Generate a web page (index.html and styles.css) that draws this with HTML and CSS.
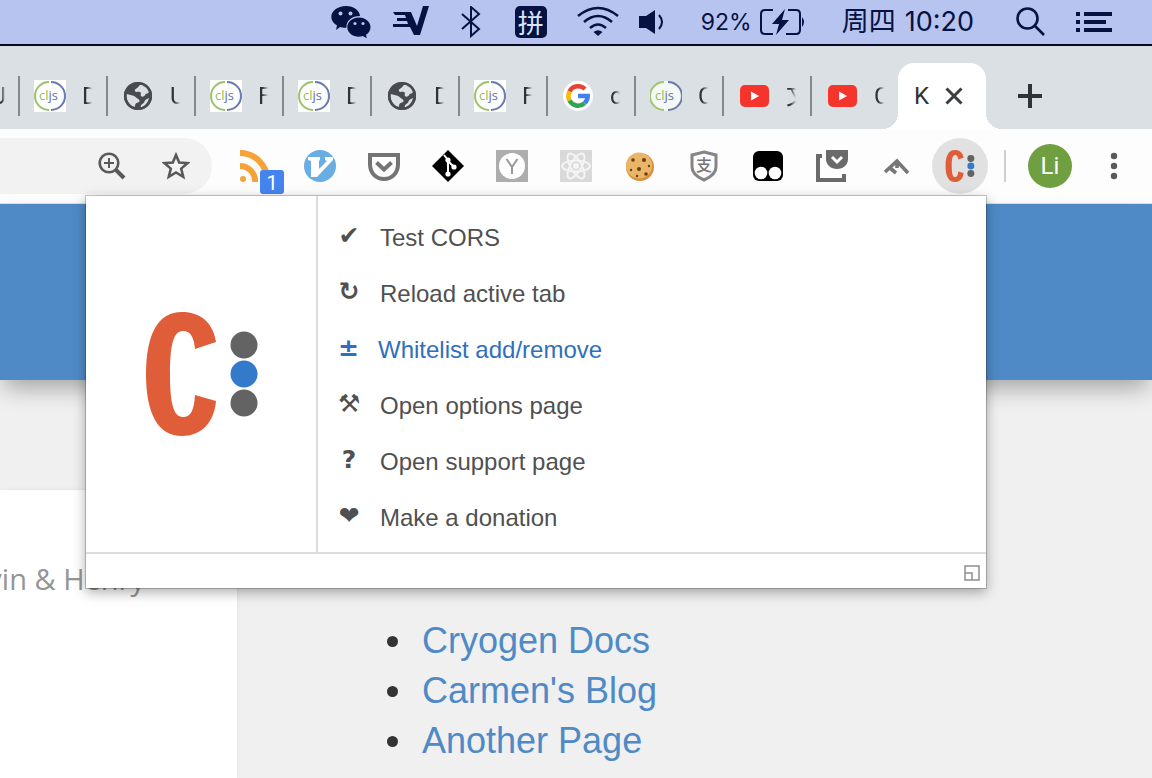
FILE: index.html
```html
<!DOCTYPE html>
<html lang="en">
<head>
<meta charset="utf-8">
<title>Kevin &amp; Henry</title>
<link rel="stylesheet" href="styles.css">
</head>
<body>
<svg class="defs" aria-hidden="true">
  <symbol id="logo" viewBox="0 0 112 124">
    <path fill="#df5e39" d="M70 30C67 10 54 0 36 0 12 0 0 22 0 62s12 62 36 62c18 0 32-12 34-35l-21-6c-1 15-4 22-12 22-10 0-13-15-13-43s3-43 13-43c8 0 11 7 12 18z"/>
    <circle cx="98" cy="33" r="13.5" fill="#636363"/>
    <circle cx="98" cy="62" r="13.5" fill="#347acb"/>
    <circle cx="98" cy="91" r="13.5" fill="#636363"/>
  </symbol>
  <symbol id="cljs" viewBox="0 0 32 32">
    <rect width="32" height="32" fill="#fdfefe"/>
    <path d="M15 2a14 14 0 0 0 0 28" fill="none" stroke="#9fc16b" stroke-width="2"/>
    <path d="M17 2a14 14 0 0 1 0 28" fill="none" stroke="#6b79ab" stroke-width="2"/>
    <text x="5" y="20" font-family="Open Sans" font-size="13" fill="#96bd5b">cl<tspan fill="#5f6fa8">js</tspan></text>
  </symbol>
  <symbol id="globe" viewBox="0 0 32 32">
    <circle cx="16" cy="16" r="14" fill="#484c50"/>
    <path fill="#dbe0e4" d="M19 4c4 1 7 4 8 8-1 2-3 1-4 3s-3 2-4 1 1-3-1-4-4 1-5-1 2-2 3-4zM4.500 14c3 1 7 1 9 3s4 2 4 4-3 1-4 3 0 2-1 3C7 25.500 4 20 4.500 14zM27 18c-1 5-4 8-8 9.500-1-1 0-3 2-4s1-3 3-4z"/>
    <circle cx="16" cy="16" r="12.800" fill="none" stroke="#484c50" stroke-width="2.600"/>
  </symbol>
  <symbol id="youtube" viewBox="0 0 32 32">
    <rect x="2" y="5" width="29" height="22" rx="5" fill="#f5342c"/>
    <path d="M13 11.500v9l8-4.500z" fill="#fff"/>
  </symbol>
</svg>

<header class="menubar">
  <span class="mb-icon mb-wide"><svg width="40" height="34" viewBox="0 0 40 34"><path fill="#051242" d="M15 1c8 0 13.500 4.500 14 10-8 0-14 4.500-13.500 11.500-2 .4-4.500.2-6.500-.5L5 25l1-4.500C2.500 18.500.3 15.500.3 12 .3 6 6.500 1 15 1z"/><path fill="#051242" d="M28 12.500c6.500 0 11.500 4.500 11.500 9.700 0 3.300-2 6-4.500 7.600l.8 3.500-4-2.200c-1 .3-2.500.6-3.800.6-6.500 0-11.700-4.200-11.700-9.500s5.200-9.700 11.700-9.700z"/><g fill="#b7c4f0"><circle cx="9.500" cy="8.500" r="2"/><circle cx="19.500" cy="8.500" r="2"/><circle cx="24" cy="18.500" r="1.600"/><circle cx="32" cy="18.500" r="1.600"/></g></svg></span>
  <span class="mb-icon mb-wide"><svg width="36" height="34" viewBox="0 0 36 34"><path fill="#051242" d="M0 7h18l6 14 6-20h6L27 30h-6l-4-8H0v-3h15l-1-3H4v-3h9l-1-3H2z"/></svg></span>
  <span class="mb-icon mb-wide"><svg width="20" height="32" viewBox="0 0 20 32"><path fill="none" stroke="#051242" stroke-width="2" d="M1 8l17 15-8 7V1l8 7L1 23"/></svg></span>
  <span class="mb-icon mb-wide"><span class="ime">拼</span></span>
  <span class="mb-icon mb-wifi"><svg width="42" height="32" viewBox="0 0 42 32"><g fill="none" stroke="#051242" stroke-width="2.600"><path d="M1 10q20-16 40 0M7 16q14-12 28 0M13 22q8-7 16 0"/></g><path fill="#051242" d="M16.500 26q4.500-3.500 9 0L21 30z"/></svg></span>
  <span class="mb-icon mb-volume"><svg width="28" height="26" viewBox="0 0 28 26"><path fill="#051242" d="M1 7h7l9-6v24l-9-6H1z"/><path d="M21 6q6 7 0 14" fill="none" stroke="#051242" stroke-width="2"/></svg></span>
  <span class="battery">92%
    <svg width="46" height="26" viewBox="0 0 46 26"><path d="M13 1H5Q1 1 1 5v16q0 4 4 4h8M28 1h8q4 0 4 4v16q0 4-4 4H26" fill="none" stroke="#051242" stroke-width="2"/><path fill="#051242" d="M25 0L12 15h7l-3 11 13-15h-7zM42 8q4 5 0 10z"/></svg>
  </span>
  <time class="clock"><span class="day">周四</span><span>10:20</span></time>
  <button class="mb-button" aria-label="Search"><svg width="30" height="30" viewBox="0 0 30 30"><g fill="none" stroke="#051242" stroke-width="2.600"><circle cx="11.500" cy="11.500" r="10"/><path d="M19 19l9 9"/></g></svg></button>
  <button class="mb-button" aria-label="Notifications"><svg width="36" height="22" viewBox="0 0 36 22"><path stroke="#051242" stroke-width="4" d="M0 3h4M8 3h28M0 11h4M8 11h22M0 19h4M8 19h28"/></svg></button>
</header>

<nav class="tabs" aria-label="Tabs">
  <button class="tab tab-first"><span class="title">U</span></button>
  <button class="tab"><svg><use href="#cljs"/></svg><span class="title">D</span></button>
  <button class="tab"><svg><use href="#globe"/></svg><span class="title">U</span></button>
  <button class="tab"><svg><use href="#cljs"/></svg><span class="title">F</span></button>
  <button class="tab"><svg><use href="#cljs"/></svg><span class="title">D</span></button>
  <button class="tab"><svg><use href="#globe"/></svg><span class="title">D</span></button>
  <button class="tab"><svg><use href="#cljs"/></svg><span class="title">F</span></button>
  <button class="tab"><svg viewBox="0 0 32 32"><circle cx="16" cy="16" r="15" fill="#fff"/><g fill="none" stroke-width="4.500"><path stroke="#e64335" d="M7.500 11.500A9.700 9.700 0 0 1 23 9"/><path stroke="#f9bb05" d="M7.500 20.500a9.700 9.700 0 0 1 0-9"/><path stroke="#34a351" d="M22.500 23.200a9.700 9.700 0 0 1-15-2.700"/><path stroke="#4280ef" d="M16 16h9.700a9.700 9.700 0 0 1-3.200 7.200"/></g></svg><span class="title">c</span></button>
  <button class="tab"><svg viewBox="0 0 32 32"><circle cx="16" cy="16" r="15" fill="#f4f8f7"/><path d="M14 2a14 14 0 0 0 0 28" fill="none" stroke="#a3c56f" stroke-width="2"/><path d="M18 2a14 14 0 0 1 0 28" fill="none" stroke="#6b79ab" stroke-width="2"/><text x="5" y="20" font-family="Open Sans" font-size="13" fill="#96bd5b">cl<tspan fill="#5f6fa8">js</tspan></text></svg><span class="title">C</span></button>
  <button class="tab"><svg><use href="#youtube"/></svg><span class="title">文</span></button>
  <button class="tab"><svg><use href="#youtube"/></svg><span class="title">C</span></button>
  <div class="tab-active"><span>K</span><button class="close" aria-label="Close tab"><svg width="18" height="18" viewBox="0 0 18 18"><path d="M1.500 1.500l15 15M16.500 1.500l-15 15" stroke="#3b3e41" stroke-width="3"/></svg></button></div>
  <button class="new-tab" aria-label="New tab"><svg width="24" height="24" viewBox="0 0 24 24"><path d="M12 0v24M0 12h24" stroke="#303336" stroke-width="4"/></svg></button>
</nav>

<div class="toolbar">
  <div class="omnibox">
    <button aria-label="Zoom"><svg width="28" height="28" viewBox="0 0 28 28"><g fill="none" stroke="#5a5a5a"><circle cx="11" cy="11" r="9.300" stroke-width="2.600"/><path stroke-width="4" d="M18 18l8 8"/><path stroke-width="2" d="M11 6v10M6 11h10"/></g></svg></button>
    <button aria-label="Bookmark"><svg width="28" height="28" viewBox="0 0 28 28"><path fill="none" stroke="#5a5a5a" stroke-width="2.600" d="M14 3l3.200 7.500 8.300.7-6.300 5.400 2 8.200L14 20.500l-7.200 4.300 2-8.200-6.300-5.400 8.300-.7z"/></svg></button>
  </div>
  <div class="extensions">
    <button class="ext" aria-label="Feed"><svg viewBox="0 0 32 32"><g fill="none" stroke="#f5a338" stroke-width="6"><path d="M0 3a27 27 0 0 1 27 29M0 16a15 15 0 0 1 15 16"/></g><circle cx="3" cy="29" r="3" fill="#f5a338"/></svg><span class="badge">1</span></button>
    <button class="ext" aria-label="Vimium"><svg viewBox="0 0 32 32"><circle cx="16" cy="16" r="16" fill="#6aade2"/><path fill="#fff" d="M4 7h12v3l-1 1v8l8-8-2-1V7h8v3L13 27H7V11l-3-1z"/></svg></button>
    <button class="ext" aria-label="Pocket"><svg viewBox="0 0 32 32"><path d="M2 5h28v9c0 9-6 15-14 15S2 23 2 14z" fill="none" stroke="#747474" stroke-width="4"/><path d="M8.500 12.500l7.500 7 7.500-7" fill="none" stroke="#747474" stroke-width="4"/></svg></button>
    <button class="ext" aria-label="Git"><svg viewBox="0 0 32 32"><path d="M16 0l16 16-16 16L0 16z"/><g fill="none" stroke="#fff" stroke-width="2"><path d="M12 5l4 5v14M16 11l6 6"/></g><g fill="#fff"><circle cx="16" cy="10" r="2.600"/><circle cx="16" cy="24" r="2.600"/><circle cx="22" cy="17" r="2.600"/></g></svg></button>
    <button class="ext" aria-label="Y"><svg viewBox="0 0 32 32"><path fill="#adadad" d="M0 0h32v32H0z"/><circle cx="16" cy="16" r="13" fill="#fff"/><path d="M10.500 9l5.500 8 5.500-8M16 16v8" fill="none" stroke="#999" stroke-width="2"/></svg></button>
    <button class="ext" aria-label="React"><svg viewBox="0 0 32 32"><path fill="#d9d9d9" d="M0 0h32v32H0z"/><g fill="none" stroke="#f5f5f5" stroke-width="2"><ellipse cx="16" cy="16" rx="14" ry="5.500"/><ellipse cx="16" cy="16" rx="14" ry="5.500" transform="rotate(60 16 16)"/><ellipse cx="16" cy="16" rx="14" ry="5.500" transform="rotate(120 16 16)"/></g><circle cx="16" cy="16" r="3" fill="#f5f5f5"/></svg></button>
    <button class="ext" aria-label="Cookies"><svg viewBox="0 0 32 32"><circle cx="16" cy="17" r="14" fill="#d98f3b"/><circle cx="15" cy="15.500" r="13" fill="#e9b568"/><g fill="#6e3d12"><circle cx="9" cy="10" r="1.800"/><circle cx="20" cy="10" r="2"/><circle cx="15" cy="19" r="2"/><circle cx="7" cy="20" r="1.200"/><circle cx="22" cy="24" r="1.800"/><circle cx="13" cy="26" r="1.200"/><circle cx="25" cy="16" r="1.200"/></g></svg></button>
    <button class="ext" aria-label="Alipay"><svg viewBox="0 0 32 32"><path d="M16 2l12 3v12c0 6-5 10-12 13C9 27 4 23 4 17V5z" fill="none" stroke="#858585" stroke-width="3"/><text x="8" y="21" font-family="Noto Sans CJK SC" font-size="16" font-weight="500" fill="#777">支</text></svg></button>
    <button class="ext" aria-label="Tampermonkey"><svg viewBox="0 0 32 32"><rect x="1" y="1" width="30" height="30" rx="6"/><g fill="#fff"><circle cx="9" cy="23" r="6.300"/><circle cx="23" cy="23" r="6.300"/></g></svg></button>
    <button class="ext" aria-label="Save to Pocket"><svg viewBox="0 0 32 32"><path d="M6 6H2v24h26v-6" fill="none" stroke="#6a6a6a" stroke-width="4"/><path fill="#6a6a6a" d="M10 0h22v9c0 6-5 10-11 10S10 15 10 9z"/><path d="M16 7l5 5 5-5" fill="none" stroke="#fff" stroke-width="3"/></svg></button>
    <button class="ext" aria-label="Peaks"><svg viewBox="0 0 32 32"><g fill="none" stroke="#777" stroke-width="3.600"><path d="M5 22l12-11 11 12M10 18l6 5M17 12v6"/></g></svg></button>
    <button class="ext ext-on" aria-label="CORS"><svg><use href="#logo"/></svg></button>
  </div>
  <span class="divider"></span>
  <button class="avatar">Li</button>
  <button class="more" aria-label="Menu"><svg width="8" height="28" viewBox="0 0 8 28"><g fill="#595959"><circle cx="4" cy="4" r="3.200"/><circle cx="4" cy="14" r="3.200"/><circle cx="4" cy="24" r="3.200"/></g></svg></button>
</div>

<main class="page">
  <div class="banner"></div>
  <div class="columns">
    <article class="card"><p>Kevin &amp; Henry</p></article>
    <ul class="links">
      <li><a href="#docs">Cryogen Docs</a></li>
      <li><a href="#blog">Carmen's Blog</a></li>
      <li><a href="#page">Another Page</a></li>
    </ul>
  </div>
</main>

<section class="popup" aria-label="CORS extension">
  <div class="popup-body">
    <div class="brand"><svg width="112" height="124"><use href="#logo"/></svg></div>
    <div class="actions">
      <button><span class="glyph">✔</span>Test CORS</button>
      <button><span class="glyph">↻</span>Reload active tab</button>
      <button class="hover"><span class="glyph">±</span>Whitelist add/remove</button>
      <button><span class="glyph">⚒</span>Open options page</button>
      <button><span class="glyph">?</span>Open support page</button>
      <button><span class="glyph">❤</span>Make a donation</button>
    </div>
  </div>
  <div class="popup-foot"><button aria-label="Open in window"><svg width="16" height="16" viewBox="0 0 16 16"><path d="M1 1h14v14H1zM1 8h7v7" fill="none" stroke="#8f8f8f" stroke-width="1.500"/></svg></button></div>
</section>
</body>
</html>
```

FILE: styles.css
```css
* { box-sizing: border-box; }
body {
  margin: 0;
  min-height: 100vh;
  display: flex;
  flex-direction: column;
  position: relative;
  overflow: hidden;
  background: #f0f0f0;
  font-family: "Liberation Sans", Arial, sans-serif;
}
button {
  margin: 0;
  padding: 0;
  border: 0;
  background: none;
  font: inherit;
  color: inherit;
}
svg { display: block; flex: none; }
.defs { position: absolute; width: 0; height: 0; }

.menubar {
  display: flex;
  justify-content: flex-end;
  align-items: center;
  height: 46px;
  padding-right: 40px;
  background: #b7c4f0;
  border-bottom: 2px solid #070b28;
  color: #051242;
  font-family: Inter, "Noto Sans CJK SC", sans-serif;
}
.mb-icon { display: flex; justify-content: center; }
.mb-wide { width: 60px; }
.mb-wifi { width: 74px; }
.mb-volume { width: 34px; }
.ime {
  width: 32px;
  height: 32px;
  border-radius: 5px;
  background: #051242;
  color: #dbe2fa;
  font: 26px/32px "Noto Sans CJK SC", sans-serif;
  text-align: center;
}
.battery {
  display: flex;
  align-items: center;
  gap: 8px;
  padding: 0 36px 0 32px;
  font-size: 23px;
}
.clock {
  display: flex;
  align-items: center;
  gap: 9px;
  font-size: 27px;
  line-height: 32px;
  white-space: nowrap;
}
.mb-button { margin-left: 42px; }
.mb-button + .mb-button { margin-left: 30px; }

.tabs {
  display: flex;
  align-items: center;
  height: 83px;
  padding-top: 17px;
  background: #dbe0e4;
  color: #303336;
  font: 24px/32px Roboto, "Noto Sans CJK SC", sans-serif;
}
.tab {
  display: flex;
  flex: none;
  align-items: center;
  gap: 16px;
  width: 88px;
  height: 40px;
  padding-left: 14px;
  border-left: 2px solid #85898d;
}
.tab svg { width: 32px; height: 32px; }
.tab-first { width: 18px; padding: 0; border: 0; }
.title {
  width: 12px;
  overflow: hidden;
  white-space: nowrap;
  text-align: left;
  -webkit-mask-image: linear-gradient(90deg, #000 35%, transparent 85%);
  mask-image: linear-gradient(90deg, #000 35%, transparent 85%);
}
.tab-first .title { width: 6px; direction: rtl; }
.tab-active {
  position: relative;
  display: flex;
  flex: none;
  align-items: center;
  gap: 16px;
  width: 88px;
  height: 66px;
  padding-left: 16px;
  border-radius: 16px 16px 0 0;
  background: #fff;
}
.tab-active::before,
.tab-active::after {
  content: "";
  position: absolute;
  bottom: 0;
  width: 16px;
  height: 16px;
}
.tab-active::before {
  right: 100%;
  background: radial-gradient(circle at 0 0, transparent 16px, #fff 16px);
}
.tab-active::after {
  left: 100%;
  background: radial-gradient(circle at 100% 0, transparent 16px, #fff 16px);
}
.new-tab { margin-left: 32px; }

.toolbar {
  display: flex;
  align-items: center;
  height: 75px;
  background: #fdfdfd;
  border-bottom: 1px solid #e3e3e3;
}
.omnibox {
  display: flex;
  flex: 1;
  justify-content: flex-end;
  gap: 36px;
  height: 56px;
  margin-right: 12px;
  padding-right: 22px;
  border-radius: 0 28px 28px 0;
  background: #f2f2f2;
}
.extensions { display: flex; }
.ext {
  position: relative;
  display: flex;
  align-items: center;
  justify-content: center;
  width: 56px;
  height: 56px;
  margin: 0 4px;
  border-radius: 50%;
}
.ext svg { width: 32px; height: 32px; }
.ext-on { background: #e1e1e2; }
.badge {
  position: absolute;
  right: 0;
  bottom: 0;
  width: 24px;
  height: 24px;
  border-radius: 3px;
  background: #4584ee;
  color: #fff;
  font: 20px/26px Roboto, sans-serif;
}
.divider {
  width: 2px;
  height: 32px;
  margin: 0 22px 0 12px;
  background: #cfcfcf;
}
.avatar {
  width: 44px;
  height: 44px;
  border-radius: 50%;
  background: #6f9f40;
  color: #fff;
  font: 24px/44px Roboto, sans-serif;
}
.more {
  display: flex;
  justify-content: center;
  width: 64px;
  margin: 0 6px 0 10px;
}

.page { flex: 1; }
.banner {
  height: 176px;
  background: #4f8ac6;
  box-shadow: 0 12px 22px -4px rgba(0, 0, 0, 0.32);
}
.columns { display: flex; }
.card {
  display: flex;
  justify-content: flex-end;
  width: 237px;
  height: 288px;
  margin-top: 110px;
  padding: 68px 92px 0 0;
  background: #fff;
  box-shadow: 0 0 4px rgba(0, 0, 0, 0.08);
}
.card p {
  margin: 0;
  color: #959595;
  font: 29px/42px "Open Sans", sans-serif;
  white-space: nowrap;
}
.links {
  margin: 236px 0 0;
  padding-left: 179px;
  color: #333;
  font-size: 36px;
  line-height: 50px;
}
.links li { padding-left: 6px; }
.links a { color: #4f8ac6; text-decoration: none; }

.popup {
  position: absolute;
  top: 196px;
  right: 166px;
  width: 900px;
  background: #fff;
  color: #505050;
  box-shadow: 0 0 0 1px rgba(0, 0, 0, 0.2), 0 4px 12px rgba(0, 0, 0, 0.34);
}
.popup-body { display: flex; }
.brand {
  display: flex;
  align-items: center;
  justify-content: center;
  width: 232px;
  padding-left: 2px;
  border-right: 2px solid #ddd;
}
.actions {
  display: flex;
  flex: 1;
  flex-direction: column;
  padding: 14px 20px 6px;
}
.actions button {
  display: flex;
  align-items: center;
  height: 56px;
  font-size: 24px;
}
.actions .hover { color: #2f6fbe; }
.glyph {
  width: 22px;
  margin-right: 20px;
  padding-bottom: 4px;
  font: bold 25px/32px "DejaVu Sans", sans-serif;
  text-align: center;
}
.hover .glyph { width: 20px; }
.popup-foot {
  display: flex;
  align-items: center;
  justify-content: flex-end;
  height: 36px;
  padding: 4px 6px 0 0;
  border-top: 2px solid #ddd;
}
```
